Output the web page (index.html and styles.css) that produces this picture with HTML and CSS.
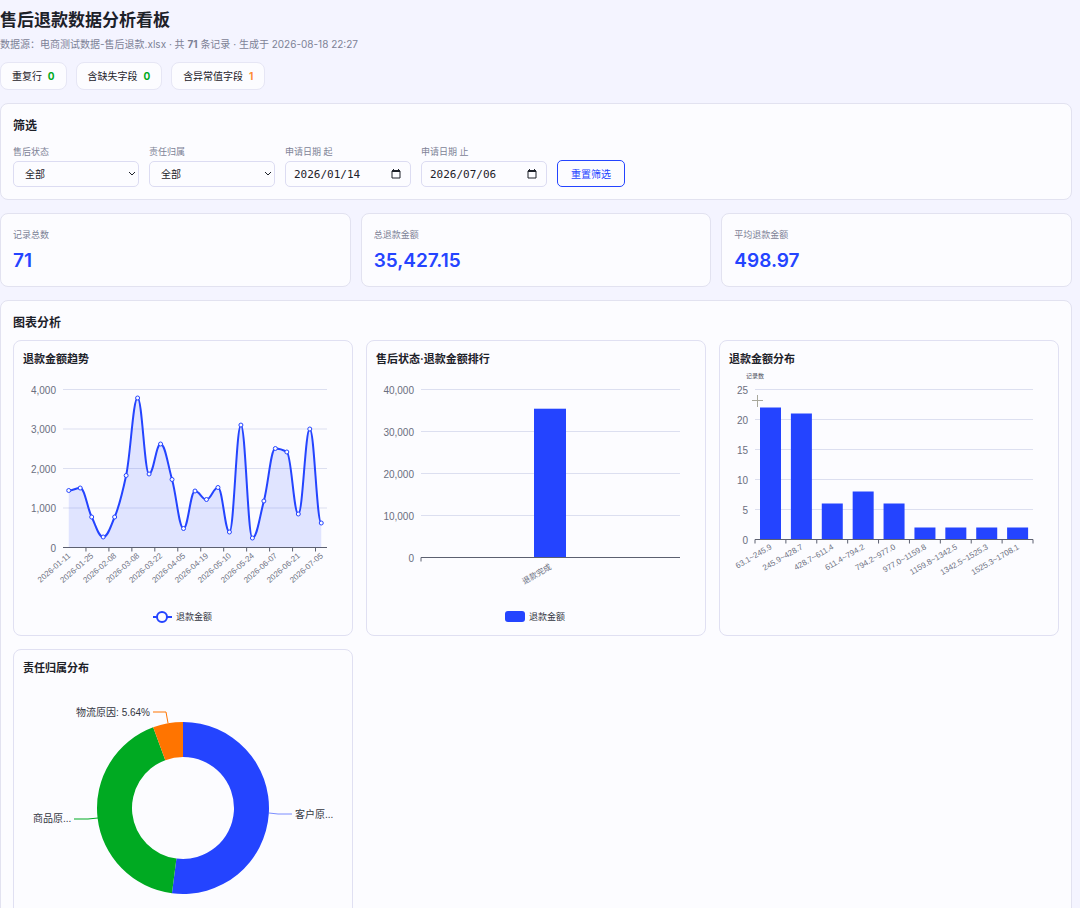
FILE: index.html
```html
<!doctype html>
<html lang="zh-CN">
<head>
<meta charset="utf-8">
<meta name="viewport" content="width=device-width, initial-scale=1">
<title>售后退款数据分析看板</title>
<link rel="stylesheet" href="styles.css">
</head>
<body>

<main class="page">

  <header class="page-head">
    <h1>售后退款数据分析看板</h1>
    <p class="meta">数据源：电商测试数据-售后退款.xlsx · 共 <b>71</b> 条记录 · 生成于 2026-08-18 22:27</p>
    <div class="chips">
      <span class="chip">重复行 <b class="ok">0</b></span>
      <span class="chip">含缺失字段 <b class="ok">0</b></span>
      <span class="chip">含异常值字段 <b class="warn">1</b></span>
    </div>
  </header>

  <section class="panel">
    <h2>筛选</h2>
    <form class="filters">
      <div class="field">
        <label for="status">售后状态</label>
        <div class="control">
          <select id="status"><option>全部</option><option>退款完成</option></select>
          <svg class="chevron" viewBox="0 0 8 6" aria-hidden="true"><path d="M1 1l3 3 3-3"/></svg>
        </div>
      </div>
      <div class="field">
        <label for="duty">责任归属</label>
        <div class="control">
          <select id="duty"><option>全部</option><option>客户原因</option><option>商品原因</option><option>物流原因</option></select>
          <svg class="chevron" viewBox="0 0 8 6" aria-hidden="true"><path d="M1 1l3 3 3-3"/></svg>
        </div>
      </div>
      <div class="field">
        <label for="from">申请日期 起</label>
        <div class="control">
          <input id="from" type="text" value="2026/01/14">
          <svg class="calendar" viewBox="0 0 10 10" aria-hidden="true"><path d="M1 2h8v7H1z"/><path class="bar" d="M1 1h8v2H1zM2 0h1v1H2zM7 0h1v1H7z"/></svg>
        </div>
      </div>
      <div class="field">
        <label for="to">申请日期 止</label>
        <div class="control">
          <input id="to" type="text" value="2026/07/06">
          <svg class="calendar" viewBox="0 0 10 10" aria-hidden="true"><path d="M1 2h8v7H1z"/><path class="bar" d="M1 1h8v2H1zM2 0h1v1H2zM7 0h1v1H7z"/></svg>
        </div>
      </div>
      <button type="reset">重置筛选</button>
    </form>
  </section>

  <section class="kpis">
    <div class="panel kpi"><span>记录总数</span><strong>71</strong></div>
    <div class="panel kpi"><span>总退款金额</span><strong>35,427.15</strong></div>
    <div class="panel kpi"><span>平均退款金额</span><strong>498.97</strong></div>
  </section>

  <section class="panel">
    <h2>图表分析</h2>
    <div class="charts">
      <article class="card">
        <h3>退款金额趋势</h3>
        <svg id="trend" viewBox="0 0 320 258"></svg>
      </article>
      <article class="card">
        <h3>售后状态·退款金额排行</h3>
        <svg id="rank" viewBox="0 0 320 258"></svg>
      </article>
      <article class="card">
        <h3>退款金额分布</h3>
        <svg id="hist" viewBox="0 0 320 258"></svg>
      </article>
      <article class="card">
        <h3>责任归属分布</h3>
        <svg id="donut" viewBox="0 0 320 258"></svg>
      </article>
    </div>
  </section>

</main>

<script src="charts.js"></script>
</body>
</html>
```
FILE: styles.css
```css
*{box-sizing:border-box}

body{
  margin:0;
  background:#f4f4ff;
  color:#1d2129;
  font:10px/16px Inter,"Noto Sans CJK SC",sans-serif;
}

.page{
  display:flex;
  flex-direction:column;
  gap:13px;
  padding:8px 8px 16px 0;
}

/* ---------- header ---------- */
h1,h2,h3,p{margin:0}
h1{font-size:17px;line-height:24px;font-weight:700}
h2{font-size:12px;line-height:20px;font-weight:700}
h3{font-size:11px;line-height:18px;font-weight:700}

.meta{margin-top:4px;color:#7d8296}

.chips{display:flex;gap:9px;margin-top:10px}
.chip{
  padding:5px 11px;
  border:1px solid #e6e6f5;
  border-radius:8px;
  background:#fcfcff;
}
.chip b{margin-left:3px}
.ok{color:#00aa22}
.warn{color:#ff8a30}

/* ---------- panels ---------- */
.panel{
  padding:12px;
  border:1px solid #e2e2f0;
  border-radius:8px;
  background:#fcfcff;
}

/* ---------- filters ---------- */
.filters{
  display:flex;
  flex-wrap:wrap;
  align-items:flex-end;
  gap:10px;
  margin-top:8px;
}
.field{display:flex;flex-direction:column;gap:1px;width:126px}
.field label{color:#7d8296;font-size:9px}
.control{position:relative}

select,input{
  appearance:none;
  display:block;
  width:100%;
  height:26px;
  border:1px solid #dcdcf2;
  border-radius:5px;
  background:#fcfcff;
  color:#1d2129;
}
select{padding:0 11px;font:10px Inter,"Noto Sans CJK SC",sans-serif}
input{padding:0 8px;font:11px "DejaVu Sans Mono",monospace}

.chevron,.calendar{
  position:absolute;
  top:0;bottom:0;
  margin:auto 0;
  fill:none;
  stroke:#1d2129;
  pointer-events:none;
}
.chevron{right:3px;width:8px;height:6px}
.calendar{right:10px;width:10px;height:10px}
.calendar .bar{fill:#1d2129;stroke:none}

button{
  height:27px;
  padding:0 13px;
  border:1px solid #2444ff;
  border-radius:5px;
  background:#fcfcff;
  color:#2444ff;
  font:10px Inter,"Noto Sans CJK SC",sans-serif;
}

/* ---------- totals ---------- */
.kpis{display:grid;grid-template-columns:repeat(3,1fr);gap:10px}
.kpi{display:flex;flex-direction:column;gap:4px}
.kpi span{color:#7d8296;font-size:9px;line-height:18px}
.kpi strong{color:#2444ff;font-size:19px;line-height:26px;font-weight:600}

/* ---------- charts ---------- */
.charts{
  display:grid;
  grid-template-columns:repeat(3,1fr);
  gap:13px;
  margin-top:7px;
}
.card{
  padding:9px;
  border:1px solid #e0e0f2;
  border-radius:8px;
}
.card svg{
  display:block;
  width:100%;
  overflow:visible;
  font-family:"Liberation Sans","Noto Sans CJK SC",sans-serif;
}

.grid{stroke:#dcdff0}
.axis{stroke:#5c6070;fill:none}
.tick{fill:#6a6e7e;font-size:10px;text-anchor:end}
.cat{fill:#6a6e7e;font-size:8px;text-anchor:end}
.axis-name{fill:#4a4d5a;font-size:6px;text-anchor:middle}
.bar-fill{fill:#2444ff}
.area{fill:#2444ff;fill-opacity:.13}
.line{stroke:#2444ff;stroke-width:2;fill:none}
.dot{stroke:#2444ff;stroke-width:1;fill:#fcfcff}
.legend{fill:#33363f;font-size:9px}
.key{stroke:#2444ff;stroke-width:2;fill:#fcfcff}
.pie-label{fill:#33363f;font-size:10px}
.leader{fill:none}
.cross{stroke:#a8a89c;fill:none}
```
FILE: charts.js
```js
const q = id => document.getElementById(id);

/* ---------- shared axes ---------- */
function axes(g){
  let out = "";
  for (let v = 0; v <= g.max; v += g.step){
    const y = g.bottom - v / g.max * (g.bottom - g.top);
    if (v) out += `<path class="grid" d="M${g.left} ${y}H${g.right}"/>`;
    out += `<text class="tick" x="${g.left - 7}" y="${y + 4}">${v.toLocaleString("en-US")}</text>`;
  }
  return out;
}

function baseline(g, ticks){
  let d = `M${g.left} ${g.bottom}H${g.right}`;
  ticks.forEach(x => d += `M${x} ${g.bottom}v4`);
  return `<path class="axis" d="${d}"/>`;
}

function catLabel(text, x, y, angle){
  return `<text class="cat" transform="translate(${x} ${y}) rotate(${-angle})">${text}</text>`;
}

/* ---------- weekly trend, smooth line ---------- */
(() => {
  const g = {left:40, right:304, top:21.5, bottom:179.5, max:4000, step:1000};
  const values = [1443,1506,772,266,772,1823,3785,1861,2620,1722,481,1430,1215,
                  1519,392,3100,240,1177,2506,2418,848,3000,620];
  const dates = ["2026-01-11","2026-01-25","2026-02-08","2026-03-08","2026-03-22","2026-04-05",
                 "2026-04-19","2026-05-10","2026-05-24","2026-06-07","2026-06-21","2026-07-05"];
  const w = (g.right - g.left) / values.length;
  const pts = values.map((v,i) => [g.left + w * (i + .5), g.bottom - v / g.max * (g.bottom - g.top)]);

  // flat tangents at the peaks, averaged slopes elsewhere
  const slope = pts.map((p,i) => {
    if (!i || i === pts.length - 1) return 0;
    const a = (p[1] - pts[i-1][1]) / w, b = (pts[i+1][1] - p[1]) / w;
    return a * b <= 0 ? 0 : 2 * a * b / (a + b);
  });
  let d = `M${pts[0]}`;
  for (let i = 1; i < pts.length; i++){
    const [x0,y0] = pts[i-1], [x1,y1] = pts[i], h = w * .4;
    d += `C${x0 + h} ${y0 + slope[i-1] * h} ${x1 - h} ${y1 - slope[i] * h} ${x1} ${y1}`;
  }

  const ticks = dates.map((_,i) => g.left + w * 2 * i);
  q("trend").innerHTML = axes(g)
    + `<path class="area" d="${d}V${g.bottom}H${pts[0][0]}Z"/>`
    + baseline(g, ticks.slice(1))
    + `<path class="line" d="${d}"/>`
    + pts.map(p => `<circle class="dot" cx="${p[0]}" cy="${p[1]}" r="2"/>`).join("")
    + dates.map((t,i) => catLabel(t, ticks[i] + 8, g.bottom + 9, 41)).join("")
    + `<path class="line" d="M130 249h19"/><circle class="key" cx="139" cy="249" r="5"/>`
    + `<text class="legend" x="153" y="252">退款金额</text>`;
})();

/* ---------- amount by status ---------- */
(() => {
  const g = {left:45, right:304, top:21.5, bottom:189.5, max:40000, step:10000};
  const h = 35427.15 / g.max * (g.bottom - g.top);
  q("rank").innerHTML = axes(g)
    + `<rect class="bar-fill" x="158" y="${g.bottom - h}" width="32" height="${h}"/>`
    + baseline(g, [g.left])
    + catLabel("退款完成", 176, g.bottom + 11, 30)
    + `<rect class="bar-fill" x="129" y="243" width="20" height="11" rx="3"/>`
    + `<text class="legend" x="153" y="252">退款金额</text>`;
})();

/* ---------- histogram ---------- */
(() => {
  const g = {left:26, right:304, top:21.5, bottom:171.5, max:25, step:5};
  const counts = [22,21,6,8,6,2,2,2,2];
  const edges = ["63.1","245.9","428.7","611.4","794.2","977.0","1159.8","1342.5","1525.3","1708.1"];
  const w = (g.right - g.left) / counts.length;
  let out = axes(g) + `<text class="axis-name" x="26" y="10">记录数</text>`;
  counts.forEach((c,i) => {
    const h = c / g.max * (g.bottom - g.top);
    out += `<rect class="bar-fill" x="${g.left + w * i + 5}" y="${g.bottom - h}" width="21" height="${h}"/>`;
    out += catLabel(`${edges[i]}~${edges[i+1]}`, g.left + w * (i + .5) + 2, g.bottom + 9, 30);
  });
  out += baseline(g, edges.map((_,i) => g.left + w * i));
  out += `<path class="cross" d="M23 32.5h11M28.5 27v12"/>`;
  q("hist").innerHTML = out;
})();

/* ---------- share by duty ---------- */
(() => {
  const cx = 160, cy = 131, R = 86, r = 51;
  const parts = [[.5205,"#2444ff"],[.4231,"#00aa22"],[.0564,"#ff7400"]];
  const at = (t, k) => [cx + k * Math.sin(t * 2 * Math.PI), cy - k * Math.cos(t * 2 * Math.PI)];
  let t = 0, out = "";
  parts.forEach(([share, color]) => {
    const e = t + share, big = share > .5 ? 1 : 0;
    out += `<path fill="${color}" d="M${at(t,R)}A${R} ${R} 0 ${big} 1 ${at(e,R)}L${at(e,r)}A${r} ${r} 0 ${big} 0 ${at(t,r)}Z"/>`;
    t = e;
  });
  out += `<path class="leader" stroke="#2444ff" stroke-opacity=".6" d="M246 136l9 1h14"/>
    <path class="leader" stroke="#00aa22" d="M75 141l-10 1H51"/>
    <path class="leader" stroke="#ff7400" d="M145 46l-2-11h-13"/>
    <text class="pie-label" x="272" y="141">客户原...</text>
    <text class="pie-label" x="10" y="145">商品原...</text>
    <text class="pie-label" x="127" y="39" text-anchor="end">物流原因: 5.64%</text>`;
  q("donut").innerHTML = out;
})();
```
